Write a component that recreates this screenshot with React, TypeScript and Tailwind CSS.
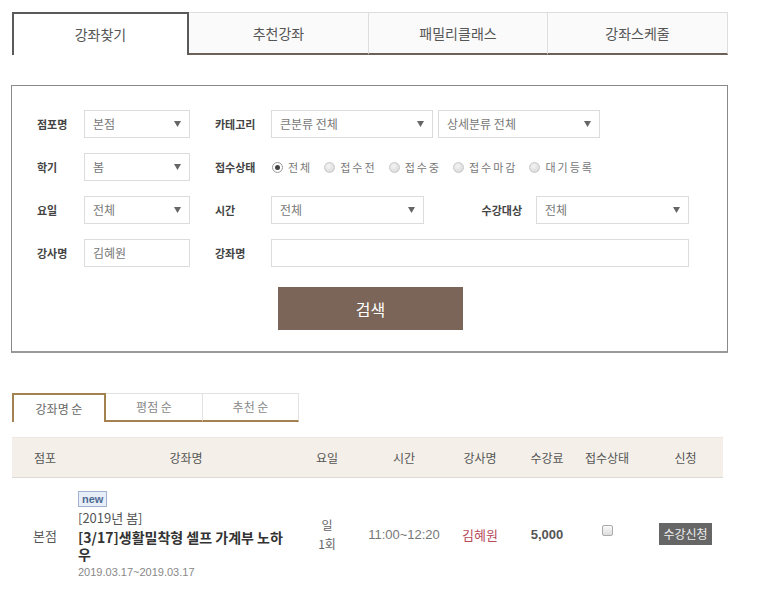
import React from "react";

const Arrow = () => (
  <svg width="7" height="6" viewBox="0 0 7 6" className="shrink-0">
    <path d="M0 0 H7 L3.5 6 Z" fill="#666" />
  </svg>
);

function Select({ text, w }: { text: string; w: string }) {
  return (
    <div className={`${w} h-[28px] border border-[#dcdcdc] bg-white flex items-center justify-between pl-[8px] pr-[8px] text-[12px] text-[#777]`}>
      <span>{text}</span>
      <Arrow />
    </div>
  );
}

function Label({ children, w = "w-[47px]" }: { children: React.ReactNode; w?: string }) {
  return <div className={`${w} shrink-0 text-[11px] font-bold text-[#444]`}>{children}</div>;
}

function Radio({ checked, label }: { checked?: boolean; label: string }) {
  return (
    <div className="flex items-center gap-[5px] text-[11px] text-[#777] tracking-[2px]">
      {checked ? (
        <span className="w-[11px] h-[11px] rounded-full border border-[#999] bg-white flex items-center justify-center">
          <span className="w-[5px] h-[5px] rounded-full bg-[#444]" />
        </span>
      ) : (
        <span className="w-[11px] h-[11px] rounded-full border border-[#c8c8c8] bg-[radial-gradient(circle_at_40%_35%,#f4f4f4,#d4d4d4)]" />
      )}
      <span>{label}</span>
    </div>
  );
}

export default function App() {
  return (
    <div className="w-[773px] h-[590px] overflow-hidden bg-white font-['Noto_Sans_CJK_KR',sans-serif] text-[#555]">
      {/* top tabs */}
      <div className="ml-[12px] mt-[12px] w-[716px] h-[43px] flex">
        <div className="w-[177px] h-full border-2 border-b-0 border-[#5a5a5a] bg-white flex items-center justify-center text-[14px] text-[#555]">
          강좌찾기
        </div>
        <div className="w-[180px] h-full border-t border-r border-[#dedede] border-b-2 border-b-[#6b605a] bg-[#fafafa] flex items-center justify-center text-[14px] text-[#555]">
          추천강좌
        </div>
        <div className="w-[179px] h-full border-t border-r border-[#dedede] border-b-2 border-b-[#6b605a] bg-[#fafafa] flex items-center justify-center text-[14px] text-[#555]">
          패밀리클래스
        </div>
        <div className="w-[180px] h-full border-t border-r border-[#dedede] border-b-2 border-b-[#6b605a] bg-[#fafafa] flex items-center justify-center text-[14px] text-[#555]">
          강좌스케줄
        </div>
      </div>

      {/* search box */}
      <div className="ml-[11px] mt-[30px] w-[717px] h-[268px] border border-[#8a8a8a] border-b-2 border-b-[#999] pl-[25px] pt-[24px]">
        <div className="flex flex-col gap-[15px]">
          <div className="flex items-center h-[28px]">
            <Label>점포명</Label>
            <Select text="본점" w="w-[106px]" />
            <div className="w-[25px]" />
            <Label w="w-[56px]">카테고리</Label>
            <Select text="큰분류 전체" w="w-[162px]" />
            <div className="w-[5px]" />
            <Select text="상세분류 전체" w="w-[162px]" />
          </div>
          <div className="flex items-center h-[28px]">
            <Label>학기</Label>
            <Select text="봄" w="w-[106px]" />
            <div className="w-[25px]" />
            <Label w="w-[57px]">접수상태</Label>
            <div className="flex items-center gap-[12px]">
              <Radio checked label="전체" />
              <Radio label="접수전" />
              <Radio label="접수중" />
              <Radio label="접수마감" />
              <Radio label="대기등록" />
            </div>
          </div>
          <div className="flex items-center h-[28px]">
            <Label>요일</Label>
            <Select text="전체" w="w-[106px]" />
            <div className="w-[25px]" />
            <Label w="w-[56px]">시간</Label>
            <Select text="전체" w="w-[153px]" />
            <div className="w-[112px] text-right pr-[14px] text-[11px] font-bold text-[#444]">수강대상</div>
            <Select text="전체" w="w-[153px]" />
          </div>
          <div className="flex items-center h-[28px]">
            <Label>강사명</Label>
            <div className="w-[106px] h-[28px] border border-[#dcdcdc] flex items-center pl-[8px] text-[12px] text-[#777]">김혜원</div>
            <div className="w-[25px]" />
            <Label w="w-[56px]">강좌명</Label>
            <div className="w-[418px] h-[28px] border border-[#dcdcdc]" />
          </div>
        </div>
        <div className="mt-[20px] ml-[241px] w-[185px] h-[43px] bg-[#7a6558] flex items-center justify-center text-[16px] text-white">
          검색
        </div>
      </div>

      {/* sort tabs */}
      <div className="ml-[12px] mt-[40px] flex h-[29px]">
        <div className="w-[94px] h-full border-2 border-b-0 border-[#a4824f] bg-white flex items-center justify-center text-[12px] text-[#666]">
          강좌명 순
        </div>
        <div className="w-[97px] h-full border-t border-r border-[#e2e2e2] border-b-2 border-b-[#a4824f] flex items-center justify-center text-[12px] text-[#888]">
          평점 순
        </div>
        <div className="w-[96px] h-full border-t border-r border-[#e2e2e2] border-b-2 border-b-[#a4824f] flex items-center justify-center text-[12px] text-[#888]">
          추천 순
        </div>
      </div>

      {/* table */}
      <div className="ml-[12px] mt-[15px] w-[711px]">
        <div className="h-[41px] bg-[#f4f0e9] border-t border-[#ece8e0] border-b border-b-[#dedbd5] grid grid-cols-[66px_216px_66px_88px_64px_70px_50px_91px] items-center text-[12px] text-[#555] text-center">
          <div>점포</div>
          <div>강좌명</div>
          <div>요일</div>
          <div>시간</div>
          <div>강사명</div>
          <div>수강료</div>
          <div>접수상태</div>
          <div className="pl-[16px]">신청</div>
        </div>
        <div className="grid grid-cols-[66px_216px_66px_88px_64px_70px_50px_91px] items-center pt-[13px] text-center">
          <div className="text-[13px] text-[#555] pt-[2px]">본점</div>
          <div className="text-left w-[212px]">
            <div className="w-fit border border-[#9fb3d0] bg-[#e8eef8] px-[3px] h-[16px] leading-[14px] text-[11px] font-bold text-[#4c6a94] font-['Liberation_Sans',sans-serif]">new</div>
            <div className="mt-[3px] text-[13px] leading-[16px] text-[#555]">[2019년 봄]</div>
            <div className="mt-[3px] text-[14px] leading-[17px] font-bold text-[#333]">[3/17]생활밀착형 셀프 가계부 노하우</div>
            <div className="mt-[2px] text-[11px] leading-[14px] text-[#888] font-['Liberation_Sans','Noto_Sans_CJK_KR',sans-serif]">2019.03.17~2019.03.17</div>
          </div>
          <div className="text-[12px] text-[#666] leading-[19px] pb-[3px]">
            <div>일</div>
            <div>1회</div>
          </div>
          <div className="text-[13px] text-[#777] font-['Liberation_Sans',sans-serif]">11:00~12:20</div>
          <div className="text-[13px] text-[#b84a5c]">김혜원</div>
          <div className="text-[13px] font-bold text-[#555] font-['Liberation_Sans',sans-serif]">5,000</div>
          <div className="flex justify-center pb-[10px]">
            <span className="w-[11px] h-[11px] rounded-[2px] border border-[#aaa] bg-[linear-gradient(#fafafa,#ddd)]" />
          </div>
          <div className="flex justify-center pl-[16px] pb-[2px]">
            <span className="h-[22px] px-[4px] bg-[#666] text-[12px] text-[#eee] flex items-center">수강신청</span>
          </div>
        </div>
      </div>
    </div>
  );
}
